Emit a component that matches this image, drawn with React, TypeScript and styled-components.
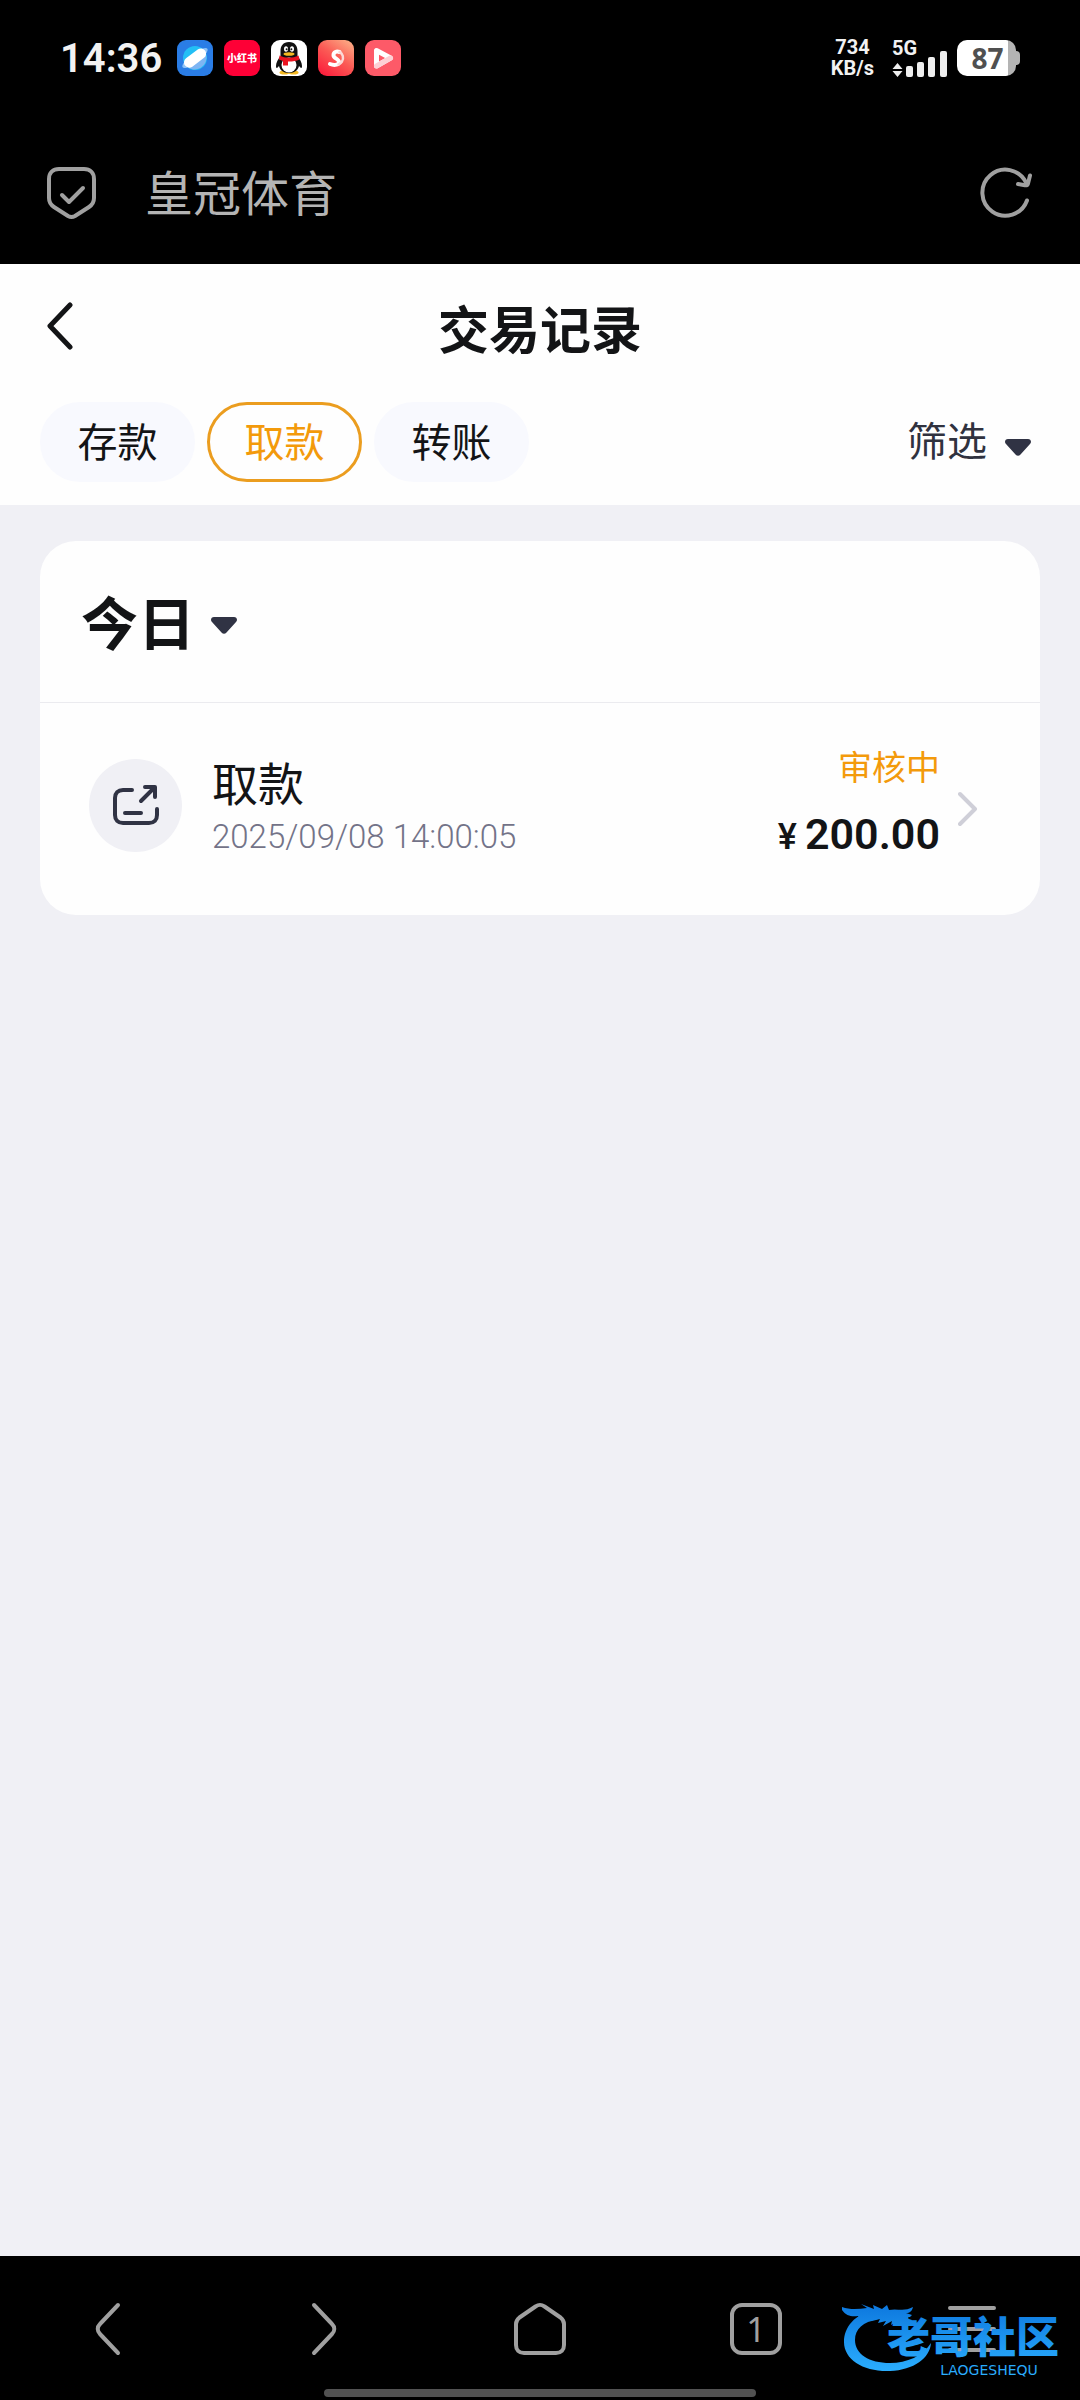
import React, { useState } from "react";
import styled, { createGlobalStyle } from "styled-components";

const GlobalStyle = createGlobalStyle`
  * { box-sizing: border-box; }
  body {
    margin: 0;
    background: #f0f0f5;
    font-family: Roboto, "Noto Sans CJK SC", sans-serif;
    color: #131416;
  }
  button {
    margin: 0;
    padding: 0;
    border: 0;
    background: none;
    color: inherit;
    font: inherit;
    cursor: pointer;
  }
  h1, h2, p { margin: 0; font: inherit; }
  svg { display: block; flex: none; }
`;

const Page = styled.div`
  display: flex;
  flex-direction: column;
  min-height: 100vh;
`;

/* ---------- system status bar ---------- */

const StatusBar = styled.div`
  display: flex;
  align-items: center;
  justify-content: space-between;
  padding: 40px 60px 46px;
  background: #000;
  color: #f2f2f2;
`;

const StatusGroup = styled.div<{ $gap: number }>`
  display: flex;
  align-items: center;
  height: 36px;
  gap: ${(p) => p.$gap}px;
`;

const Clock = styled.time`
  margin-right: 4px;
  padding-top: 2px;
  font: 600 40px/36px Roboto, sans-serif;
`;

const NetSpeed = styled.div`
  display: flex;
  flex-direction: column;
  margin-right: 8px;
  text-align: center;
  font: 700 20px/21px Roboto, sans-serif;
`;

const Signal = styled.div`
  display: flex;
  flex-direction: column;
  justify-content: space-between;
  height: 37px;
  font: 700 20px/16px Roboto, sans-serif;
`;

const SignalRow = styled.div`
  display: flex;
  height: 26px;
  margin-top: -6px;
`;

const Battery = styled.div`
  display: flex;
  align-items: center;
`;

const BatteryBody = styled.div`
  width: 59px;
  height: 36px;
  padding-left: 2px;
  border-radius: 10px;
  background: linear-gradient(90deg, #fff 51px, #b4b4b4 51px);
  color: #505050;
  text-align: center;
  font: 700 28px/36px "Noto Sans", sans-serif;
`;

const BatteryTip = styled.div`
  width: 4px;
  height: 14px;
  border-radius: 0 4px 4px 0;
  background: #b4b4b4;
`;

/* ---------- browser chrome ---------- */

const AddressBar = styled.div`
  display: flex;
  align-items: center;
  height: 142px;
  padding: 0 48px 0 46px;
  background: #000;
  color: #b4b4b4;
`;

const SiteName = styled.p`
  flex: 1;
  margin-left: 48px;
  padding-top: 4px;
  font-size: 48px;
  line-height: 56px;
`;

const BrowserNav = styled.nav`
  position: relative;
  display: flex;
  flex-direction: column;
  align-items: center;
  gap: 34px;
  padding: 46px 0 3px;
  background: #000;
  color: #a0a0a0;
`;

const NavButtons = styled.div`
  display: grid;
  grid-template-columns: repeat(5, 1fr);
  align-self: stretch;
`;

const NavButton = styled.button`
  display: flex;
  align-items: center;
  justify-content: center;
  height: 53px;
`;

const TabCount = styled.span`
  width: 52px;
  height: 52px;
  border: 4px solid #a0a0a0;
  border-radius: 12px;
  text-align: center;
  font: 400 34px/44px "Noto Sans", sans-serif;
`;

const HomeIndicator = styled.div`
  width: 40%;
  height: 8px;
  border-radius: 4px;
  background: #525252;
`;

const Watermark = styled.div`
  position: absolute;
  right: 14px;
  bottom: 22px;
  pointer-events: none;
`;

/* ---------- page header ---------- */

const Header = styled.header`
  background: #fefefe;
`;

const TitleRow = styled.div`
  display: grid;
  grid-template-columns: 1fr auto 1fr;
  align-items: center;
  height: 130px;
  padding: 6px 46px 0;
`;

const PageTitle = styled.h1`
  font-size: 51px;
  font-weight: 700;
  line-height: 64px;
`;

const Toolbar = styled.div`
  display: flex;
  align-items: center;
  justify-content: space-between;
  padding: 8px 49px 23px 40px;
`;

const Tabs = styled.div`
  display: flex;
  gap: 12px;
`;

const Tab = styled.button<{ $active: boolean }>`
  min-width: 155px;
  height: 80px;
  padding: 3px 34px 0;
  border: 3px solid ${(p) => (p.$active ? "#eb9d1f" : "#f8f9fe")};
  border-radius: 40px;
  background: ${(p) => (p.$active ? "#fefefe" : "#f8f9fe")};
  color: ${(p) => (p.$active ? "#f39a0b" : "#131416")};
  font-size: 40px;
  line-height: 56px;
`;

const FilterButton = styled.button`
  display: flex;
  align-items: baseline;
  gap: 18px;
  padding-top: 2px;
  color: #30323f;
  font-size: 40px;
  line-height: 56px;
`;

/* ---------- record list ---------- */

const Content = styled.main`
  flex: 1;
  padding: 36px 40px;
`;

const Card = styled.section`
  border-radius: 36px;
  background: #fefefe;
`;

const CardHeader = styled.h2`
  display: flex;
  align-items: center;
  height: 162px;
  padding: 8px 41px 0;
  border-bottom: 1px solid #ebebef;
`;

const DayButton = styled.button`
  display: flex;
  align-items: center;
  gap: 16px;
  font-size: 57px;
  font-weight: 700;
  line-height: 72px;
`;

const Record = styled.a`
  display: flex;
  align-items: center;
  height: 212px;
  padding: 0 62px 0 49px;
  color: inherit;
  text-decoration: none;
`;

const RecordIcon = styled.span`
  display: flex;
  align-items: center;
  justify-content: center;
  width: 93px;
  height: 93px;
  margin-bottom: 8px;
  border-radius: 50%;
  background: #f0f0f5;
`;

const RecordInfo = styled.div`
  flex: 1;
  margin-left: 30px;
  padding-top: 2px;
`;

const RecordName = styled.p`
  font-size: 46px;
  line-height: 54px;
`;

const RecordTime = styled.time`
  display: block;
  color: #737388;
  font: 300 33px/50px Roboto, sans-serif;
`;

const RecordResult = styled.div`
  display: flex;
  flex-direction: column;
  align-items: flex-end;
  gap: 16px;
  margin-right: 18px;
  padding-bottom: 3px;
`;

const RecordState = styled.p`
  color: #f39a0b;
  font-size: 34px;
  line-height: 40px;
`;

const Amount = styled.p`
  display: flex;
  align-items: baseline;
  gap: 8px;
  font: 600 43px/60px Roboto, sans-serif;
`;

const Currency = styled.span`
  font: 500 36px/60px Roboto, sans-serif;
`;

/* ---------- icons ---------- */

const Caret = () => (
  <svg width="26" height="17" viewBox="0 0 26 17" aria-hidden="true">
    <path
      d="M3 0h20c2.800 0 4 3 2 5L15.500 15.500c-1.500 1.600-3.500 1.600-5 0L1 5C-1 3 .2 0 3 0z"
      fill="#303344"
    />
  </svg>
);

const BrowserAppIcon = () => (
  <svg width="36" height="36" viewBox="0 0 36 36" aria-hidden="true">
    <rect width="36" height="36" rx="9" fill="#2a7de6" />
    <circle cx="18" cy="18" r="12" fill="#23bff5" />
    <path d="M29 14a12 12 0 0 1-20 12z" fill="#7db5f3" />
    <ellipse cx="18" cy="18" rx="15.500" ry="4.500" transform="rotate(-37 18 18)" fill="#8fc3f7" />
    <rect x="5.500" y="12.800" width="25" height="10.500" rx="5.200" transform="rotate(-37 18 18)" fill="#fff" />
  </svg>
);

const RedNoteIcon = () => (
  <svg width="36" height="36" viewBox="0 0 36 36" aria-hidden="true">
    <rect width="36" height="36" rx="9" fill="#fe0036" />
    <text x="18" y="22" textAnchor="middle" fontSize="10" fontWeight="900" fill="#fff">
      小红书
    </text>
  </svg>
);

const PenguinIcon = () => (
  <svg width="36" height="36" viewBox="0 0 36 36" aria-hidden="true">
    <rect width="36" height="36" rx="9" fill="#fff" />
    <ellipse cx="13.500" cy="32.500" rx="5" ry="2" fill="#f5b921" />
    <ellipse cx="22.500" cy="32.500" rx="5" ry="2" fill="#f5b921" />
    <path
      d="M18 2C12 2 9.500 6 9.500 11v5C7 19 5 23 5 26c0 2.500 1 2.500 3 0 1 4 4 7 10 7s9-3 10-7c2 2.500 3 2.500 3 0 0-3-2-7-4.500-10v-5C26.500 6 24 2 18 2z"
      fill="#111"
    />
    <ellipse cx="18" cy="25" rx="7.500" ry="7.500" fill="#fff" />
    <ellipse cx="15" cy="9" rx="2" ry="2.800" fill="#fff" />
    <ellipse cx="21" cy="9" rx="2" ry="2.800" fill="#fff" />
    <circle cx="15.600" cy="9.300" r="1" fill="#111" />
    <circle cx="20.400" cy="9.300" r="1" fill="#111" />
    <ellipse cx="18" cy="14" rx="5.500" ry="1.800" fill="#f5b921" />
    <path d="M8.500 15.500c6 3 13 3 19 0l1 4c-3.500 1.600-8 2.200-11.500 2v4h-5v-4.600l-4-1.400z" fill="#ea1320" />
  </svg>
);

const SwirlIcon = () => (
  <svg width="36" height="36" viewBox="0 0 36 36" aria-hidden="true">
    <defs>
      <linearGradient id="swirl" x1="0.2" y1="1" x2="0.9" y2="0">
        <stop offset="0" stopColor="#fb1f3c" />
        <stop offset="0.500" stopColor="#fb5a55" />
        <stop offset="1" stopColor="#fcae86" />
      </linearGradient>
    </defs>
    <rect width="36" height="36" rx="9" fill="url(#swirl)" />
    <path d="M21.500 12c-3-1-6 0-6 3.200 0 3.500 5.500 3.300 5.500 6.800 0 2.500-4 4-9 2" fill="none" stroke="#fff" strokeWidth="4" strokeLinecap="round" strokeLinejoin="round" />
    <path d="M21.500 12c3.500 1.500 4.500 6 2.500 9.500-1 1.600-2 2.500-3.500 3" fill="none" stroke="#fbd9d6" strokeWidth="2.500" strokeLinecap="round" />
  </svg>
);

const VideoIcon = () => (
  <svg width="36" height="36" viewBox="0 0 36 36" aria-hidden="true">
    <rect width="36" height="36" rx="9" fill="#fd5a68" />
    <path d="M11.500 10.500v15.500L25.500 18z" fill="none" stroke="#fff" strokeWidth="5" strokeLinejoin="round" />
    <path d="M11.500 26L25.500 18" stroke="#fdd0d5" strokeWidth="5" strokeLinecap="round" />
  </svg>
);

const SignalIcon = () => (
  <svg width="55" height="26" viewBox="0 0 55 26" fill="#eee" aria-hidden="true">
    <path d="M5.500 12l5 6H.5zM5.500 26l5-6H.5z" />
    <rect x="14" y="15" width="7" height="11" rx="2" />
    <rect x="25" y="11" width="7" height="15" rx="2" />
    <rect x="36" y="6" width="7" height="20" rx="2" />
    <rect x="48" y="0" width="7" height="26" rx="2" />
  </svg>
);

const ShieldIcon = () => (
  <svg width="51" height="54" viewBox="0 0 51 54" fill="none" stroke="#a0a0a0" strokeWidth="4" strokeLinecap="round" strokeLinejoin="round" aria-hidden="true">
    <path d="M13 3h25c6 0 10 4 10 10v19c0 4-2 7-5 9L29 50c-2.500 1.500-4.500 1.500-7 0L8 41c-3-2-5-5-5-9V13C3 7 7 3 13 3z" />
    <path d="M16 29l7 7 14-14" />
  </svg>
);

const ReloadIcon = () => (
  <svg width="52" height="54" viewBox="0 0 52 54" fill="none" stroke="#a0a0a0" strokeWidth="4" strokeLinecap="round" strokeLinejoin="round" aria-hidden="true">
    <path d="M47 34.500A23 23 0 1 1 46 16.500" />
    <path d="M50 9.500l-2 8c-.5 1.500-1.500 2-3 1.800L38 18" />
  </svg>
);

const WithdrawIcon = () => (
  <svg width="46" height="40" viewBox="0 0 46 40" fill="none" stroke="#303344" strokeWidth="4" strokeLinecap="round" strokeLinejoin="round" aria-hidden="true">
    <path d="M19 5H10C5 5 2 8 2 13v17c0 5 3 8 8 8h26c5 0 8-3 8-8v-6" />
    <path d="M12 28h16M28 16L41 3M32 2h10v10" />
  </svg>
);

const CommunityLogo = () => (
  <svg width="226" height="78" viewBox="0 0 226 78" role="img" aria-label="老哥社区">
    <defs>
      <linearGradient id="logoBlue" gradientUnits="userSpaceOnUse" x1="0" y1="0" x2="0" y2="74">
        <stop offset="0" stopColor="#0b74dc" />
        <stop offset="1" stopColor="#2cb0ff" />
      </linearGradient>
    </defs>
    <g fill="url(#logoBlue)">
      <path d="M34 10C15 14 4 27 4 42c0 18 20 30 46 29 24-1 40-13 41-28-8 13-24 20-41 20-21 0-35-9-35-23 0-11 8-18 23-21z" />
      <path d="M2 7c8 3 17 2 25 1l-6-4 13 5-1-4 9 4 5-4 2 5c8-2 15 2 24-3-1 4-3 6-7 6l6 2-2 2h-7l9 3-2 3c-5 0-9-1-13-2l-6 4 1-4-9 5 3-5-8 2 2-4-8 2c-7 1-12-2-14-5-6 1-12 0-16-6z" />
      <text x="133" y="53" textAnchor="middle" fontSize="43" fontWeight="900">
        老哥社区
      </text>
      <text x="149" y="75" textAnchor="middle" fontSize="14" fontFamily="DejaVu Sans, sans-serif">
        LAOGESHEQU
      </text>
    </g>
  </svg>
);

const navIcon = {
  fill: "none",
  stroke: "currentColor",
  strokeWidth: 4,
  strokeLinecap: "round" as const,
  strokeLinejoin: "round" as const,
  "aria-hidden": true,
};

const TABS = ["存款", "取款", "转账"];

const RECORDS = [
  { name: "取款", time: "2025/09/08 14:00:05", state: "审核中", amount: "200.00" },
];

export default function App() {
  const [active, setActive] = useState("取款");

  return (
    <>
      <GlobalStyle />
      <Page>
        <StatusBar>
          <StatusGroup $gap={11}>
            <Clock>14:36</Clock>
            <BrowserAppIcon />
            <RedNoteIcon />
            <PenguinIcon />
            <SwirlIcon />
            <VideoIcon />
          </StatusGroup>
          <StatusGroup $gap={10}>
            <NetSpeed>
              <span>734</span>
              <span>KB/s</span>
            </NetSpeed>
            <Signal>
              5G
              <SignalRow>
                <SignalIcon />
              </SignalRow>
            </Signal>
            <Battery>
              <BatteryBody>87</BatteryBody>
              <BatteryTip />
            </Battery>
          </StatusGroup>
        </StatusBar>

        <AddressBar>
          <ShieldIcon />
          <SiteName>皇冠体育</SiteName>
          <button type="button" aria-label="刷新">
            <ReloadIcon />
          </button>
        </AddressBar>

        <Header>
          <TitleRow>
            <button type="button" aria-label="返回">
              <svg width="27" height="62" viewBox="0 0 27 62" fill="none" stroke="#131416" strokeWidth="5" strokeLinecap="round" strokeLinejoin="round" aria-hidden="true">
                <path d="M24 4L4 25l20 21" />
              </svg>
            </button>
            <PageTitle>交易记录</PageTitle>
          </TitleRow>
          <Toolbar>
            <Tabs role="tablist">
              {TABS.map((tab) => (
                <Tab
                  key={tab}
                  type="button"
                  role="tab"
                  aria-selected={tab === active}
                  $active={tab === active}
                  onClick={() => setActive(tab)}
                >
                  {tab}
                </Tab>
              ))}
            </Tabs>
            <FilterButton type="button">
              筛选
              <Caret />
            </FilterButton>
          </Toolbar>
        </Header>

        <Content>
          <Card>
            <CardHeader>
              <DayButton type="button">
                今日
                <Caret />
              </DayButton>
            </CardHeader>
            {RECORDS.map((record) => (
              <Record key={record.time} href="#record">
                <RecordIcon>
                  <WithdrawIcon />
                </RecordIcon>
                <RecordInfo>
                  <RecordName>{record.name}</RecordName>
                  <RecordTime>{record.time}</RecordTime>
                </RecordInfo>
                <RecordResult>
                  <RecordState>{record.state}</RecordState>
                  <Amount>
                    <Currency>¥</Currency>
                    {record.amount}
                  </Amount>
                </RecordResult>
                <svg width="20" height="36" viewBox="0 0 20 36" fill="none" stroke="#cfcfd8" strokeWidth="4" strokeLinecap="round" strokeLinejoin="round" aria-hidden="true">
                  <path d="M2 3l15 15L2 33" />
                </svg>
              </Record>
            ))}
          </Card>
        </Content>

        <BrowserNav aria-label="浏览器导航">
          <NavButtons>
            <NavButton type="button" aria-label="后退">
              <svg width="26" height="54" viewBox="0 0 26 54" {...navIcon}>
                <path d="M23 3L5 22c-3 3-3 7 0 10l18 19" />
              </svg>
            </NavButton>
            <NavButton type="button" aria-label="前进">
              <svg width="26" height="54" viewBox="0 0 26 54" {...navIcon}>
                <path d="M3 3l18 19c3 3 3 7 0 10L3 51" />
              </svg>
            </NavButton>
            <NavButton type="button" aria-label="主页">
              <svg width="52" height="54" viewBox="0 0 52 54" {...navIcon}>
                <path d="M21.500 4.500L5.500 15.500C3 17.500 2 19 2 22v21c0 5 3 8 8 8h32c5 0 8-3 8-8V22c0-3-1-4.500-3.500-6.500l-16-11c-3.500-2.200-5.500-2.200-9 0z" />
              </svg>
            </NavButton>
            <NavButton type="button" aria-label="标签页">
              <TabCount>1</TabCount>
            </NavButton>
            <NavButton type="button" aria-label="菜单">
              <svg width="50" height="54" viewBox="0 0 50 54" {...navIcon}>
                <path d="M3 6h44M3 27h44M3 48h44" />
              </svg>
            </NavButton>
          </NavButtons>
          <HomeIndicator />
          <Watermark>
            <CommunityLogo />
          </Watermark>
        </BrowserNav>
      </Page>
    </>
  );
}
